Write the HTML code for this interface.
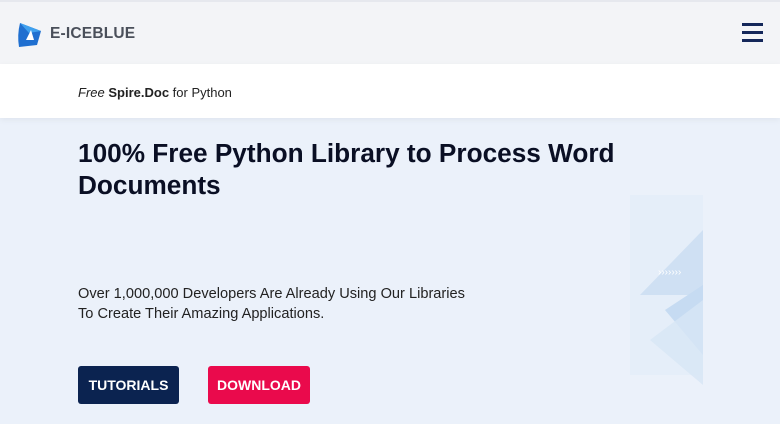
<!DOCTYPE html>
<html><head><meta charset="utf-8"><style>
*{margin:0;padding:0;box-sizing:border-box}
body{width:780px;height:424px;overflow:hidden;font-family:"Liberation Sans",sans-serif;background:#ebf1fa;position:relative}
.hdr{position:absolute;top:0;left:0;width:780px;height:64px;background:#f3f4f7;border-top:2px solid #e6e8ee}
.logo{position:absolute;left:17px;top:19px}
.brand{position:absolute;left:50px;top:23px;font-size:15.5px;font-weight:bold;color:#4a4f5a;letter-spacing:0.2px}
.hb{position:absolute;left:742px;width:21px;height:2.5px;background:#14275a}
.sub{position:absolute;top:64px;left:0;width:780px;height:54px;background:#fff;box-shadow:0 2px 6px rgba(0,0,0,.05)}
.sub p{position:absolute;left:78px;top:21px;font-size:13px;color:#222}
h1{position:absolute;left:78px;top:137px;font-size:26.2px;line-height:32px;color:#0a0f24;font-weight:bold;width:640px}
.desc{position:absolute;left:78px;top:284px;font-size:14.6px;line-height:20px;color:#222}
.btn{position:absolute;top:366px;height:38px;border-radius:3px;color:#fff;font-weight:bold;font-size:14px;text-align:center;line-height:38px}
</style></head><body>
<div class="hdr">
<svg class="logo" width="26" height="27" viewBox="0 0 26 27"><path d="M3 2 L24 10 L20 24 L2 26 Q0 14 3 2Z" fill="#1f6fd0"/><path d="M3 2 L24 10 L12 12Z" fill="#3fa0ee"/><path d="M9 19 L14 9 L17 19Z" fill="#fff"/></svg>
<div class="brand">E-ICEBLUE</div>
<div class="hb" style="top:21px"></div><div class="hb" style="top:29px"></div><div class="hb" style="top:37px"></div>
</div>
<div class="sub"><p><i>Free</i> <b>Spire.Doc</b> for Python</p></div>
<svg style="position:absolute;left:590px;top:190px" width="115" height="200" viewBox="0 0 115 200">
<rect x="40" y="5" width="73" height="180" fill="#e3ecf8" opacity=".7"/>
<polygon points="113,40 113,105 50,105" fill="#cfe0f3"/>
<polygon points="113,95 113,165 75,120" fill="#c6dbf2"/>
<polygon points="113,110 113,195 60,150" fill="#d7e6f5" opacity=".8"/>
<text x="68" y="85" font-size="10" fill="#fff" font-family="Liberation Sans">&rsaquo;&rsaquo;&rsaquo;&rsaquo;&rsaquo;&rsaquo;&rsaquo;</text>
</svg>
<h1>100% Free Python Library to Process Word Documents</h1>
<div class="desc">Over 1,000,000 Developers Are Already Using Our Libraries<br>To Create Their Amazing Applications.</div>
<div class="btn" style="left:78px;width:101px;background:#0b2350">TUTORIALS</div>
<div class="btn" style="left:208px;width:102px;background:#ea0a4c">DOWNLOAD</div>
</body></html>
